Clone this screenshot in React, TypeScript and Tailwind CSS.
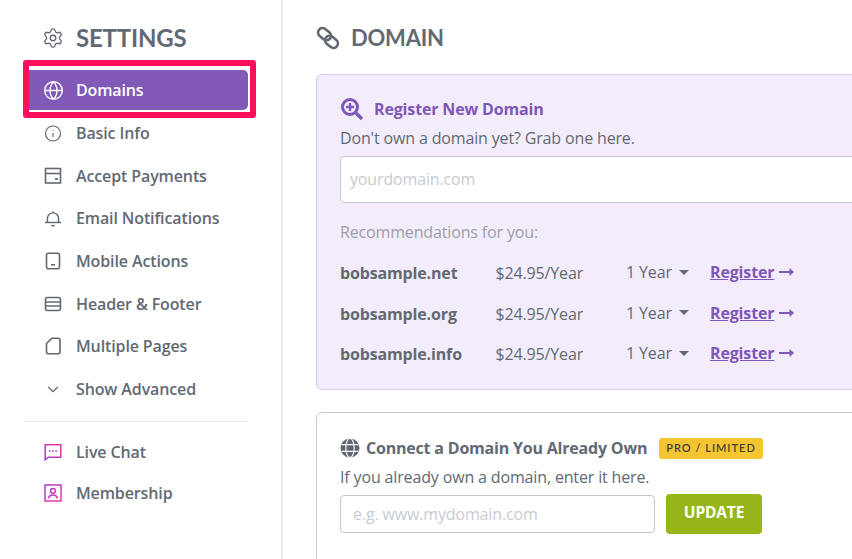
import type { ReactNode } from 'react';
import { Globe, Info, ChevronDown, Settings } from 'lucide-react';

const sans = { fontFamily: '"Open Sans", sans-serif' };
const heading = { fontFamily: 'Lato, sans-serif' };

function CardIcon() {
  return (
    <svg width="18" height="18" viewBox="0 0 18 18" fill="none" stroke="currentColor" strokeWidth="1.6">
      <rect x="1.5" y="1.5" width="15" height="14.5" />
      <path d="M1.5 6.5h15" />
      <path d="M11 12h3" strokeWidth="1.8" />
    </svg>
  );
}

function BellIcon() {
  return (
    <svg width="20" height="20" viewBox="0 0 20 20" fill="none" stroke="currentColor" strokeWidth="1.6">
      <path d="M3.8 14.5V10.500a6.200 6.200 0 0 1 12.400 0v4" />
      <path d="M10 4.200V2.500" />
      <path d="M1 15h18" />
      <path d="M8 18.500h4" />
    </svg>
  );
}

function PhoneIcon() {
  return (
    <svg width="18" height="18" viewBox="0 0 18 18" fill="none" stroke="currentColor" strokeWidth="1.6">
      <rect x="2.5" y="1.2" width="13" height="15.6" rx="2" />
      <path d="M7 12.8h4" />
    </svg>
  );
}

function HeaderIcon() {
  return (
    <svg width="18" height="18" viewBox="0 0 18 18" fill="none" stroke="currentColor" strokeWidth="1.6">
      <rect x="1.5" y="2.5" width="15" height="13" rx="2" />
      <path d="M1.5 7h15M1.5 11h15" />
    </svg>
  );
}

function PagesIcon() {
  return (
    <svg width="18" height="18" viewBox="0 0 18 18" fill="none" stroke="currentColor" strokeWidth="1.6" strokeLinejoin="round">
      <path d="M8 1.2h6a2 2 0 0 1 2 2v11.6a2 2 0 0 1-2 2H4.5a2 2 0 0 1-2-2V6.5z" />
    </svg>
  );
}

function ChatIcon() {
  return (
    <svg width="18" height="18" viewBox="0 0 18 18" fill="none" strokeWidth="1.5">
      <defs>
        <linearGradient id="chat" x1="0" y1="1" x2="1" y2="0">
          <stop offset="0" stopColor="#a43bd6" />
          <stop offset="1" stopColor="#f0379a" />
        </linearGradient>
      </defs>
      <path d="M1.2 1.8h15.6v12.4H4.5l-3.3 2.6z" stroke="url(#chat)" />
      <path d="M5 8h1.6M8.2 8h1.6M11.4 8H13" stroke="#b030c8" strokeWidth="1.6" />
    </svg>
  );
}

function MemberIcon() {
  return (
    <svg width="18" height="18" viewBox="0 0 18 18" fill="none" strokeWidth="1.5">
      <defs>
        <linearGradient id="member" x1="0" y1="0" x2="1" y2="1">
          <stop offset="0" stopColor="#a43bd6" />
          <stop offset="1" stopColor="#f0379a" />
        </linearGradient>
      </defs>
      <rect x="1" y="1" width="16" height="16" stroke="url(#member)" />
      <circle cx="9" cy="6.8" r="2.4" stroke="url(#member)" />
      <path d="M4.5 14.5c.5-2.6 2.2-3.6 4.5-3.6s4 1 4.500 3.600" stroke="url(#member)" />
    </svg>
  );
}

function LinkIcon() {
  return (
    <svg width="24" height="24" viewBox="0 0 24 24" fill="none" stroke="currentColor" strokeWidth="2.6">
      <rect x="1.5" y="3.7" width="14" height="9" rx="4.5" transform="rotate(40 8.500 8.200)" />
      <rect x="8.5" y="11.3" width="14" height="9" rx="4.5" transform="rotate(40 15.500 15.800)" />
    </svg>
  );
}

function ZoomPlus() {
  return (
    <svg width="24" height="24" viewBox="0 0 24 24" fill="none" stroke="#7e57b8" strokeWidth="3">
      <circle cx="10" cy="10" r="7.5" />
      <path d="M16 16l6 6" strokeWidth="3.4" />
      <path d="M10 6v8M6 10h8" strokeWidth="2.4" />
    </svg>
  );
}

function SolidGlobe() {
  return (
    <svg width="20" height="20" viewBox="0 0 20 20">
      <circle cx="10" cy="10" r="9.5" fill="#5f6670" />
      <g fill="none" stroke="#fff" strokeWidth="1.1">
        <ellipse cx="10" cy="10" rx="4.2" ry="9.5" />
        <path d="M1.5 6.6h17M1.5 13.4h17" />
      </g>
    </svg>
  );
}

function NavRow({ icon, label, h = 'h-[42.7px]' }: { icon: ReactNode; label: string; h?: string }) {
  return (
    <div className={`flex items-center ${h} pl-[15px] text-[#626973]`}>
      <span className="flex w-[18px] justify-center">{icon}</span>
      <span className="ml-[14px] text-[16px] font-semibold leading-none tracking-[-0.12px]" style={sans}>{label}</span>
    </div>
  );
}

const recommendations = ['bobsample.net', 'bobsample.org', 'bobsample.info'];

export default function App() {
  return (
    <div className="flex h-[559px] w-[852px] overflow-hidden bg-white tracking-[-0.15px]" style={sans}>
      {/* Sidebar */}
      <aside className="h-[559px] w-[283px] shrink-0 border-r-2 border-[#eeeeee] pl-[29px] pr-[33px] pt-[24px]">
        <div className="flex h-[28px] items-center pl-[14px] text-[#626973]">
          <Settings size={22} strokeWidth={1.5} className="-ml-[1px]" />
          <span className="ml-[12px] text-[24px] font-bold leading-none tracking-[-0.2px]" style={heading}>SETTINGS</span>
        </div>

        <div className="relative mt-[18px] flex h-[40px] w-[219px] items-center rounded-r-[5px] bg-[#8159b7] pl-[14px] text-white">
          <Globe size={21} strokeWidth={1.6} />
          <span className="ml-[12px] text-[16px] font-semibold leading-none">Domains</span>
          <div className="absolute left-[-6px] top-[-10px] h-[58px] w-[233px] rounded-[3px] border-[6px] border-[#ff0f5b]" />
        </div>

        <div className="mt-[1.7px]">
          <NavRow icon={<Info size={21} strokeWidth={1.6} />} label="Basic Info" />
          <NavRow icon={<CardIcon />} label="Accept Payments" />
          <NavRow icon={<BellIcon />} label="Email Notifications" />
          <NavRow icon={<PhoneIcon />} label="Mobile Actions" />
          <NavRow icon={<HeaderIcon />} label="Header & Footer" />
          <NavRow icon={<PagesIcon />} label="Multiple Pages" />
          <NavRow icon={<ChevronDown size={25} strokeWidth={1.5} />} label="Show Advanced" />
        </div>

        <div className="ml-[-5px] mt-[10.3px] h-px w-[224px] bg-[#e9eaec]" />

        <div className="mt-[10px]">
          <NavRow icon={<ChatIcon />} label="Live Chat" h="h-[41px]" />
          <NavRow icon={<MemberIcon />} label="Membership" h="h-[41px]" />
        </div>
      </aside>

      {/* Main */}
      <main className="min-w-0 flex-1 pl-[33px] pt-[24px]">
        <div className="flex h-[28px] items-center text-[#626973]">
          <LinkIcon />
          <span className="ml-[11px] text-[22px] font-bold leading-none tracking-[-0.2px]" style={heading}>DOMAIN</span>
        </div>

        <section className="mt-[22px] h-[316px] w-[600px] rounded-[6px] border border-[#d9c9f0] bg-[#f3edfb] pl-[23px] pt-[20px]">
          <div className="flex h-[28px] items-center">
            <ZoomPlus />
            <span className="ml-[10px] text-[16px] font-bold leading-none text-[#7e57b8]">Register New Domain</span>
          </div>
          <p className="mt-[3px] text-[16px] leading-[24px] text-[#626973]">Don't own a domain yet? Grab one here.</p>
          <input
            readOnly
            placeholder="yourdomain.com"
            className="mt-[6px] block h-[47px] w-full rounded-[4px] border border-[#c5c8d2] bg-white px-[9px] pb-[2px] text-[16px] outline-none placeholder:text-[#c8cbd0]"
          />
          <p className="mt-[17px] text-[16px] leading-[24px] text-[#9b9fa8]">Recommendations for you:</p>

          <div className="mt-[9px]">
            {recommendations.map((name) => (
              <div key={name} className="flex h-[40.5px] items-center text-[16px] text-[#626973]">
                <span className="w-[155.5px] font-bold">{name}</span>
                <span className="w-[130.5px]">$24.95/Year</span>
                <span className="flex w-[84px] items-center pb-[2px]">
                  1 Year
                  <span className="ml-[7px] h-0 w-0 border-x-[5px] border-t-[5px] border-x-transparent border-t-[#626973]" />
                </span>
                <span className="flex items-center pb-[2px] font-bold text-[#7e57b8]">
                  <span className="underline">Register</span>
                  <svg className="ml-[5px]" width="15" height="10" viewBox="0 0 15 10" fill="currentColor">
                    <path d="M0 4h10.5V1L15 5l-4.5 4V6H0z" />
                  </svg>
                </span>
              </div>
            ))}
          </div>
        </section>

        <section className="mt-[22px] h-[160px] w-[600px] rounded-[6px] border border-[#c9ccd3] bg-white pl-[23px] pt-[24px]">
          <div className="flex h-[22px] items-center">
            <SolidGlobe />
            <span className="ml-[6px] text-[16px] font-bold leading-none tracking-[-0.2px] text-[#626973]">Connect a Domain You Already Own</span>
            <span className="ml-[12px] flex h-[21px] items-center rounded-[3px] bg-[#f5c531] px-[7px] text-[11px] font-semibold tracking-[1px] text-[#3f3f3f]" style={heading}>PRO / LIMITED</span>
          </div>
          <p className="mt-[6px] text-[16px] leading-[24px] text-[#626973]">If you already own a domain, enter it here.</p>
          <div className="mt-[5px] flex items-center gap-[11px]">
            <input
              readOnly
              placeholder="e.g. www.mydomain.com"
              className="h-[38px] w-[315px] rounded-[4px] border border-[#c5c8d2] bg-white px-[12px] text-[16px] outline-none placeholder:text-[#c8cbd0]"
            />
            <button className="h-[40px] w-[96px] rounded-[4px] bg-[#96b518] pb-[2px] text-[15.5px] font-bold text-white">UPDATE</button>
          </div>
        </section>
      </main>
    </div>
  );
}
